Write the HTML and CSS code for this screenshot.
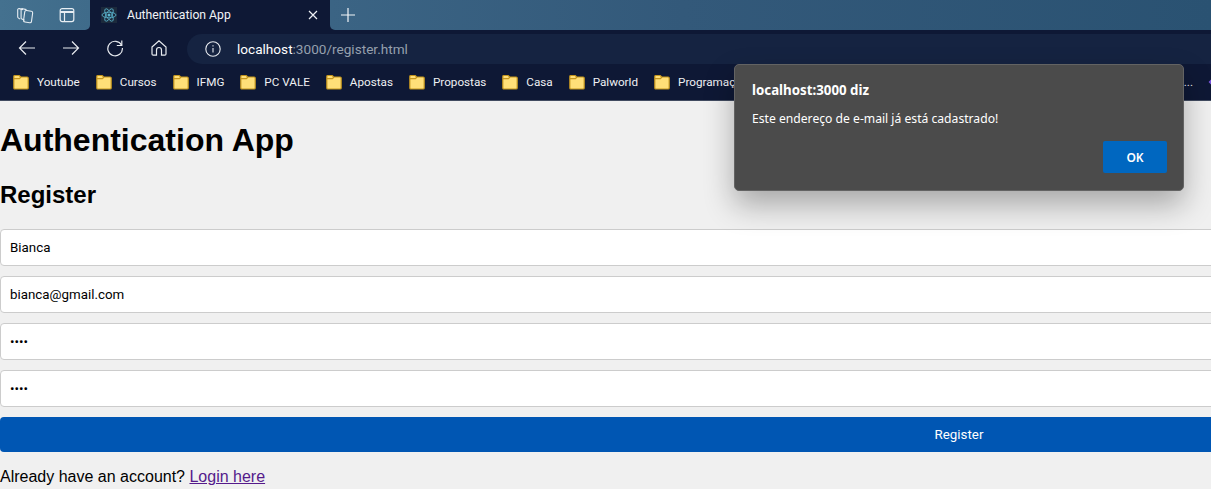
FILE: index.html
```html
<!DOCTYPE html>
<html>
<head>
  <title>Authentication App</title>
  <link rel="stylesheet" href="styles.css">
</head>
<body>
  <svg class="defs" width="0" height="0">
    <symbol id="folder" viewBox="0 0 16 16">
      <path d="M.8 2.5a1 1 0 0 1 1-1h4.4l1.5 1.5h6.5a1 1 0 0 1 1 1v10a1 1 0 0 1-1 1H1.8a1 1 0 0 1-1-1z" fill="#ffdf78" stroke="#c4951d" stroke-width="1.2"/>
      <path d="M.8 4.7h5.6L8 3" fill="none" stroke="#c4951d" stroke-width="1.2"/>
    </symbol>
  </svg>

  <div class="browser">
    <div class="tabstrip">
      <div class="strip-left">
        <svg class="icon" width="18" height="18" viewBox="0 0 18 18" fill="none" stroke="#e8eef3" stroke-width="1.1">
          <path d="M7 3.6 3.3 2.6A1.3 1.3 0 0 0 1.7 3.8v7c0 .6.3 1 .8 1.3l1.7 1"/>
          <path d="M10.5 3.6 6.6 2.7c-.8-.2-1.5.4-1.5 1.2v8c0 .6.3 1 .8 1.2l2.6 1.2"/>
          <rect x="8.2" y="4.8" width="8" height="11.6" rx="1.6" transform="rotate(8 12 10)"/>
        </svg>
        <svg class="icon" width="16" height="16" viewBox="0 0 16 16" fill="none" stroke="#e8eef3" stroke-width="1.2">
          <rect x="1.2" y="1.6" width="13.6" height="13" rx="2"/>
          <path d="M1.2 5h13.6" stroke-width="2"/>
          <path d="M5.5 5v9.5"/>
        </svg>
      </div>
      <div class="tab">
        <span class="favicon">
          <svg width="16" height="16" viewBox="0 0 16 16" fill="none" stroke="#5bb7d0" stroke-width=".8">
            <circle cx="8" cy="8" r="1.5" fill="#5bb7d0" stroke="none"/>
            <ellipse cx="8" cy="8" rx="7" ry="2.8"/>
            <ellipse cx="8" cy="8" rx="7" ry="2.8" transform="rotate(60 8 8)"/>
            <ellipse cx="8" cy="8" rx="7" ry="2.8" transform="rotate(120 8 8)"/>
          </svg>
        </span>
        <span class="tab-title">Authentication App</span>
        <svg class="tab-close" width="10" height="10" viewBox="0 0 10 10" stroke="#eef1f5" stroke-width="1.2">
          <path d="M1 1l8 8M9 1l-8 8"/>
        </svg>
      </div>
      <div class="strip-right">
        <svg width="16" height="16" viewBox="0 0 16 16" stroke="#f2f5f8" stroke-width="1.2">
          <path d="M8 1v14M1 8h14"/>
        </svg>
      </div>
    </div>

    <div class="toolbar">
      <div class="nav-buttons">
        <svg width="18" height="18" viewBox="0 0 18 18" fill="none" stroke="#e8ebf0" stroke-width="1.2">
          <path d="M17 9H1.5M8 2.5 1.5 9 8 15.5"/>
        </svg>
        <svg width="18" height="18" viewBox="0 0 18 18" fill="none" stroke="#e8ebf0" stroke-width="1.2">
          <path d="M1 9h15.5M10 2.5 16.5 9 10 15.5"/>
        </svg>
        <svg width="18" height="18" viewBox="0 0 18 18" fill="none" stroke="#e8ebf0" stroke-width="1.2">
          <path d="M15.6 6.2A7.3 7.3 0 1 0 16.4 9"/>
          <path d="M15.8 1.5v5h-5"/>
        </svg>
        <svg width="18" height="18" viewBox="0 0 18 18" fill="none" stroke="#e8ebf0" stroke-width="1.2">
          <path d="M2 8 9 1.8 16 8v7a1.2 1.2 0 0 1-1.2 1.2H11.5V11a2.5 2.5 0 0 0-5 0v5.2H3.2A1.2 1.2 0 0 1 2 15z"/>
        </svg>
      </div>
      <div class="urlbar">
        <svg width="16" height="16" viewBox="0 0 16 16" fill="none" stroke="#e8ebf0" stroke-width="1.1">
          <circle cx="8" cy="8" r="7.2"/>
          <path d="M8 7v4.6M8 4.2v1.3"/>
        </svg>
        <span class="url"><span class="url-host">localhost</span>:3000/register.html</span>
      </div>
    </div>

    <div class="bookmarks">
      <a class="bookmark"><svg width="16" height="16"><use href="#folder"/></svg>Youtube</a>
      <a class="bookmark"><svg width="16" height="16"><use href="#folder"/></svg>Cursos</a>
      <a class="bookmark"><svg width="16" height="16"><use href="#folder"/></svg>IFMG</a>
      <a class="bookmark"><svg width="16" height="16"><use href="#folder"/></svg>PC VALE</a>
      <a class="bookmark"><svg width="16" height="16"><use href="#folder"/></svg>Apostas</a>
      <a class="bookmark"><svg width="16" height="16"><use href="#folder"/></svg>Propostas</a>
      <a class="bookmark"><svg width="16" height="16"><use href="#folder"/></svg>Casa</a>
      <a class="bookmark"><svg width="16" height="16"><use href="#folder"/></svg>Palworld</a>
      <a class="bookmark bookmark-cut"><svg width="16" height="16"><use href="#folder"/></svg>Programação</a>
      <span class="bookmark-more">...</span>
      <svg class="bookmark-code" width="16" height="16" viewBox="0 0 16 16" fill="none" stroke="#7a55e0" stroke-width="2">
        <path d="M7 3 2 8l5 5"/>
      </svg>
    </div>
  </div>

  <div class="page">
    <h1>Authentication App</h1>
    <h2>Register</h2>
    <form class="register-form">
      <input type="text" value="Bianca">
      <input type="email" value="bianca@gmail.com">
      <input type="password" value="1234">
      <input type="password" value="1234">
      <button type="button">Register</button>
    </form>
    <p class="login-note">Already have an account? <a href="#">Login here</a></p>
  </div>

  <div class="alert">
    <div class="alert-title">localhost:3000 diz</div>
    <div class="alert-message">Este endereço de e-mail já está cadastrado!</div>
    <div class="alert-actions">
      <button type="button" class="alert-ok">OK</button>
    </div>
  </div>
</body>
</html>
```

FILE: styles.css
```css
html, body { margin: 0; padding: 0; height: 100%; overflow: hidden; }
body { font-family: "Liberation Sans", Arial, sans-serif; background: #f0f0f0; color: #000; }
.defs { position: absolute; }

/* browser chrome */
.browser { background: #0e1835; color: #fff; font-family: Roboto, "Noto Sans", sans-serif; }
.tabstrip { display: flex; height: 30px; }
.strip-left { width: 90px; display: flex; align-items: center; gap: 25px; padding-left: 16px; box-sizing: border-box; background: linear-gradient(90deg, #44718f, #3f6b8a); border-bottom-right-radius: 5px; }
.tab { width: 240px; display: flex; align-items: center; padding: 0 12px 0 11px; box-sizing: border-box; background: #0e1835; }
.favicon { width: 16px; height: 16px; background: #1c2a3c; display: flex; }
.tab-title { margin-left: 10px; font-size: 12.2px; color: #f1f3f6; flex: 1; white-space: nowrap; }
.strip-right { flex: 1; display: flex; align-items: center; padding-left: 10px; background: linear-gradient(90deg, #3b6484, #33597a 40%, #2a5272); border-bottom-left-radius: 5px; }

.toolbar { height: 34px; display: flex; align-items: flex-end; }
.nav-buttons { width: 187px; height: 30px; display: flex; align-items: center; gap: 26px; padding: 0 0 2px 18px; box-sizing: border-box; }
.urlbar { flex: 1; height: 30px; display: flex; align-items: center; gap: 16px; padding-left: 18px; background: #152341; border-radius: 15px 0 0 15px; }
.url { font-size: 13.6px; color: #96a0ae; white-space: nowrap; }
.url-host { color: #fff; }

.bookmarks { height: 36px; display: flex; align-items: center; gap: 16px; padding-left: 13px; overflow: hidden; border-bottom: 1px solid #414b60; font-size: 11.7px; color: #eef0f3; }
.bookmark { display: flex; align-items: center; gap: 8px; white-space: nowrap; }
.bookmark svg { flex: none; }
.bookmark-cut { width: 81px; overflow: hidden; }
.bookmark-more { margin-left: auto; }
.bookmark-code { flex: none; margin: 0 -13px 0 -1px; }

/* page */
.page { width: 1918px; }
h1 { font-size: 32px; margin: 21px 0 22px; }
h2 { font-size: 24px; margin: 0 0 20px; }
.register-form input { display: block; width: 100%; box-sizing: border-box; height: 37px; margin-bottom: 10px; padding: 10px 9px; border: 1px solid #ccc; border-radius: 4px; background: #fff; font-family: Roboto, sans-serif; font-size: 13.33px; color: #000; }
.register-form button { display: block; width: 100%; height: 35px; border: none; border-radius: 4px; background: #0056b3; color: #fff; font-family: Roboto, sans-serif; font-size: 13.33px; }
.login-note { margin: 16px 0 0; font-size: 16px; }
.login-note a { color: #551a8b; }

/* alert dialog, sits over the page */
.alert { position: absolute; top: 64px; left: 734px; width: 450px; height: 127px; box-sizing: border-box; padding: 16px 16px 0 17px; background: #4b4b4b; border: 1px solid #636363; border-radius: 5px; box-shadow: 0 14px 30px rgba(0,0,0,.3); color: #fff; font-family: "Noto Sans", "Open Sans", sans-serif; }
.alert-title { font-size: 13.3px; font-weight: 700; line-height: 18px; }
.alert-message { font-size: 12.15px; line-height: 18px; margin-top: 11px; }
.alert-actions { display: flex; justify-content: flex-end; margin-top: 13px; }
.alert-ok { width: 64px; height: 32px; border: none; border-radius: 2px; background: #0067c0; color: #fff; font-family: "Noto Sans", sans-serif; font-size: 12px; font-weight: 600; }
```
